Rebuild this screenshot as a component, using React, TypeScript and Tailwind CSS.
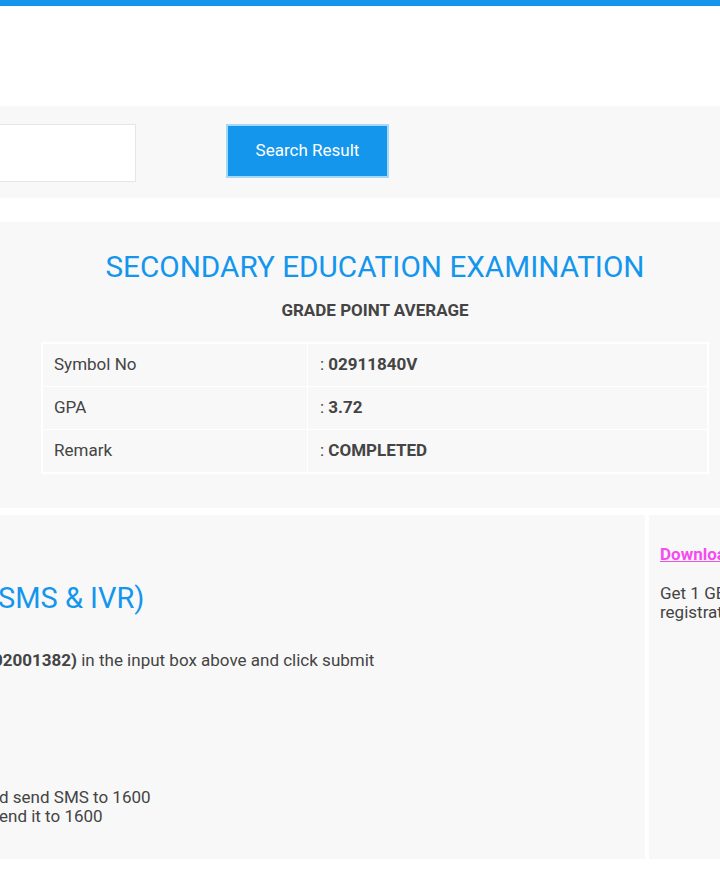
export default function App() {
  const rows = [
    { label: "Symbol No", value: "02911840V" },
    { label: "GPA", value: "3.72" },
    { label: "Remark", value: "COMPLETED" },
  ]

  return (
    <div className="w-[720px] h-[894px] overflow-hidden bg-white font-['Roboto',sans-serif] text-[#444]">
      <div className="h-[6px] bg-[#1496ed]" />
      <div className="h-[100px]" />

      {/* search band */}
      <div className="h-[92px] w-[750px] bg-[#f8f8f8] pt-[18px]">
        <div className="flex items-start">
          <input className="-ml-[170px] h-[58px] w-[306px] border border-[#e6e6e6] bg-white" />
          <button className="ml-[90px] h-[54px] w-[163px] border-2 border-[#a8d8f8] bg-[#1496ed] text-[17px] text-white">
            Search Result
          </button>
        </div>
      </div>

      <div className="h-[24px]" />

      {/* result panel */}
      <div className="w-[750px] bg-[#f8f8f8] pt-[27px] pb-[34px]">
        <h1 className="text-center text-[29.7px] leading-[36px] text-[#1496ed]">
          SECONDARY EDUCATION EXAMINATION
        </h1>
        <h2 className="mt-[15px] text-center text-[17px] font-bold leading-[20px] text-[#444]">
          GRADE POINT AVERAGE
        </h2>
        <div className="mx-[41px] mt-[22px] border-2 border-white">
          {rows.map((r, i) => (
            <div key={r.label} className={"grid grid-cols-[265px_1fr] " + (i > 0 ? "border-t border-white" : "")}>
              <div className="h-[42px] flex items-center border-r border-white pl-[11px] text-[17px] text-[#444]">
                {r.label}
              </div>
              <div className="h-[42px] flex items-center pl-[12px] text-[17px] text-[#444]">
                :&nbsp;<span className="font-bold">{r.value}</span>
              </div>
            </div>
          ))}
        </div>
      </div>

      <div className="h-[7px]" />

      {/* info panels */}
      <div className="flex gap-[4px] h-[344px] w-[1000px]">
        <div className="w-[645px] shrink-0 bg-[#f8f8f8] overflow-hidden whitespace-nowrap">
          <h3 className="-ml-[12px] mt-[64px] text-[29px] leading-[38px] text-[#1496ed]">(SMS &amp; IVR)</h3>
          <p className="-ml-[7px] mt-[33px] text-[17px] leading-[20px]">
            <span className="font-bold">02001382)</span> in the input box above and click submit
          </p>
          <p className="-ml-[1px] mt-[118px] text-[17px] leading-[19px]">d send SMS to 1600</p>
          <p className="-ml-[1px] text-[17px] leading-[19px]">end it to 1600</p>
        </div>
        <div className="w-[340px] shrink-0 bg-[#f8f8f8] pl-[11px] pt-[28px] whitespace-nowrap">
          <a href="#" className="text-[17px] font-bold leading-[20px] text-[#f54cf0] underline">
            Download App
          </a>
          <p className="mt-[17px] text-[17px] leading-[19px]">Get 1 GB data free on</p>
          <p className="text-[17px] leading-[19px]">registration</p>
        </div>
      </div>
    </div>
  )
}
